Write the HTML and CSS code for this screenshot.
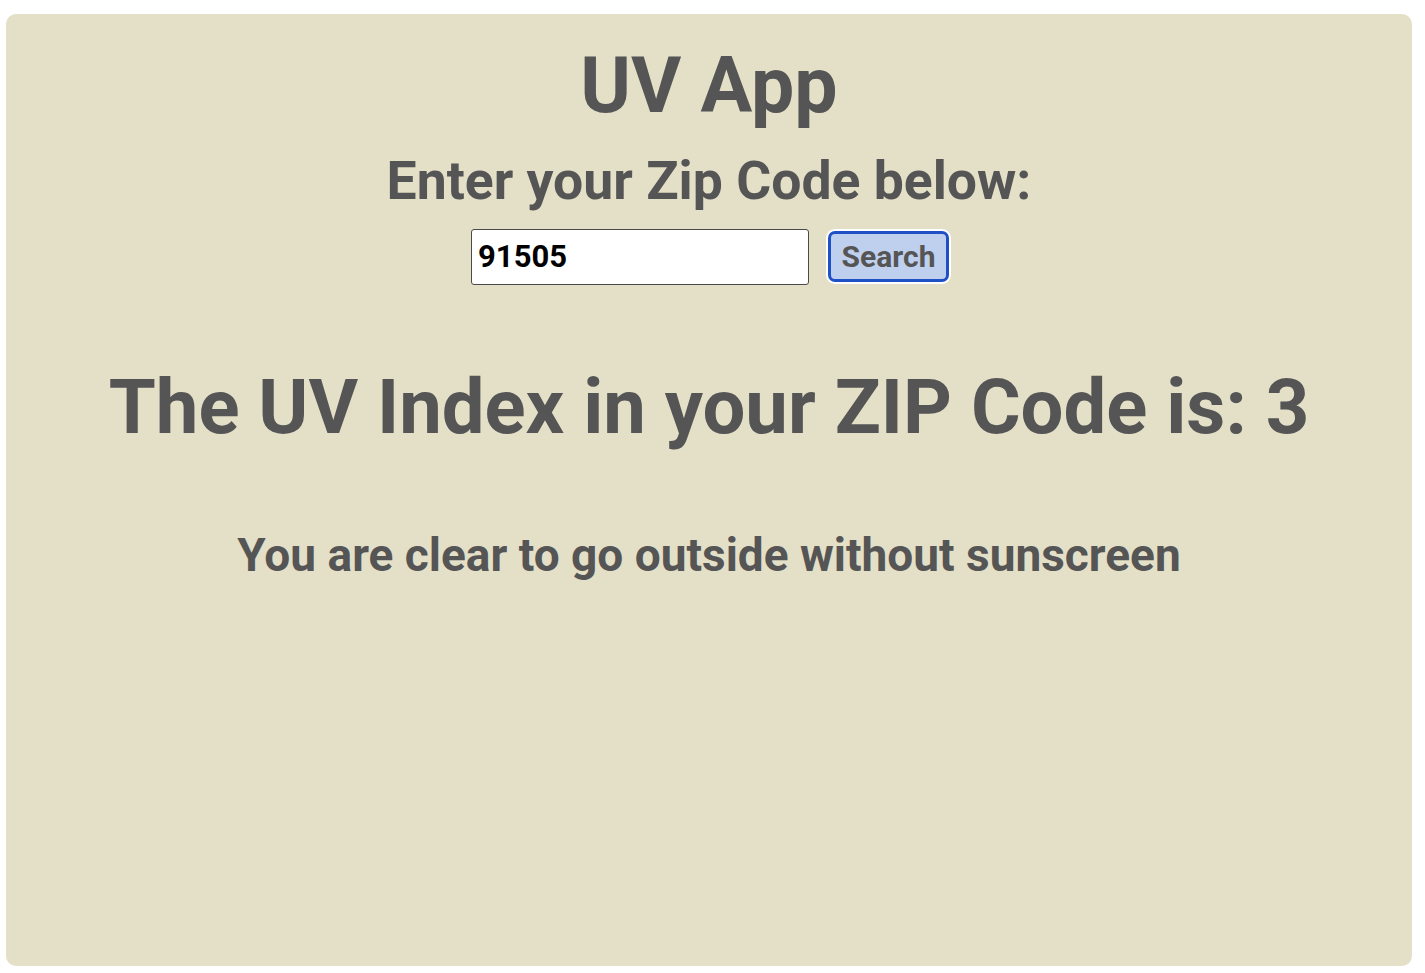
FILE: index.html
```html
<!DOCTYPE html>
<html lang="en">
<head>
<meta charset="utf-8">
<title>UV App</title>
<link rel="stylesheet" href="styles.css">
</head>
<body>
<main class="card">
  <h1 class="title">UV App</h1>
  <h2 class="prompt">Enter your Zip Code below:</h2>
  <form class="search">
    <input class="zip" type="text" value="91505">
    <button class="btn" type="button">Search</button>
  </form>
  <h2 class="result">The UV Index in your ZIP Code is: 3</h2>
  <p class="advice">You are clear to go outside without sunscreen</p>
</main>
</body>
</html>
```

FILE: styles.css
```css
html, body {
  margin: 0;
  padding: 0;
  background: #ffffff;
}
body {
  padding: 14px 13px 7px 6px;
  height: 973px;
  box-sizing: border-box;
  font-family: Roboto, "Liberation Sans", sans-serif;
}
.card {
  height: 100%;
  box-sizing: border-box;
  background: #e4e0c8;
  border-radius: 10px;
  display: flex;
  flex-direction: column;
  align-items: center;
  color: #555555;
  padding-top: 26px;
}
.title, .prompt, .result, .advice {
  margin: 0;
  font-weight: 700;
  line-height: 1.2;
  text-align: center;
}
.title {
  font-size: 77px;
}
.prompt {
  font-size: 53.5px;
  margin-top: 17px;
}
.search {
  display: flex;
  align-items: center;
  gap: 19px;
  margin-top: 15px;
  margin-left: 2px;
}
.zip {
  width: 338px;
  height: 56px;
  box-sizing: border-box;
  border: 1px solid #4a4a4a;
  border-radius: 3px;
  background: #ffffff;
  padding: 0 6px;
  font-family: Roboto, "Liberation Sans", sans-serif;
  font-weight: 700;
  font-size: 31px;
  color: #000000;
  outline: none;
}
.btn {
  height: 51px;
  box-sizing: border-box;
  padding: 0 10.5px;
  border: 3px solid #1f50c6;
  border-radius: 7px;
  background: #bfd0ee;
  box-shadow: 0 0 0 2px #ffffff;
  font-family: Roboto, "Liberation Sans", sans-serif;
  font-weight: 700;
  font-size: 30px;
  color: #555555;
}
.result {
  font-size: 76px;
  margin-top: 77px;
}
.advice {
  font-size: 46px;
  margin-top: 75px;
}
```
